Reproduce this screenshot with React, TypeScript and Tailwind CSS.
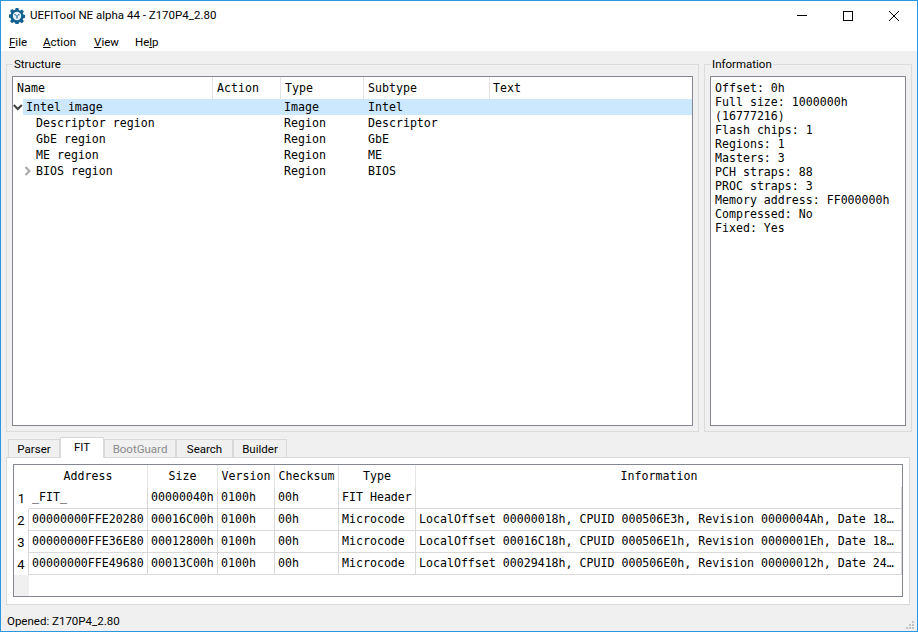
const mono = "font-['DejaVu_Sans_Mono',monospace] text-[11.6px]";
const ui = "font-['Roboto','Open_Sans',sans-serif] text-[11.5px]";

const treeRows = [
  { name: "Intel image", type: "Image", subtype: "Intel", indent: 0, selected: true, arrow: "down" },
  { name: "Descriptor region", type: "Region", subtype: "Descriptor", indent: 1 },
  { name: "GbE region", type: "Region", subtype: "GbE", indent: 1 },
  { name: "ME region", type: "Region", subtype: "ME", indent: 1 },
  { name: "BIOS region", type: "Region", subtype: "BIOS", indent: 1, arrow: "right" },
];

const infoLines = [
  "Offset: 0h",
  "Full size: 1000000h",
  "(16777216)",
  "Flash chips: 1",
  "Regions: 1",
  "Masters: 3",
  "PCH straps: 88",
  "PROC straps: 3",
  "Memory address: FF000000h",
  "Compressed: No",
  "Fixed: Yes",
];

const fitRows = [
  ["1", "_FIT_", "00000040h", "0100h", "00h", "FIT Header", ""],
  ["2", "00000000FFE20280", "00016C00h", "0100h", "00h", "Microcode", "LocalOffset 00000018h, CPUID 000506E3h, Revision 0000004Ah, Date 18…"],
  ["3", "00000000FFE36E80", "00012800h", "0100h", "00h", "Microcode", "LocalOffset 00016C18h, CPUID 000506E1h, Revision 0000001Eh, Date 18…"],
  ["4", "00000000FFE49680", "00013C00h", "0100h", "00h", "Microcode", "LocalOffset 00029418h, CPUID 000506E0h, Revision 00000012h, Date 24…"],
];

const fitCols = "grid grid-cols-[119px_70px_57px_64px_77px_1fr]";

const GearIcon = () => (
  <svg width="16" height="16" viewBox="0 0 16 16">
    <path
      fill="#0f5f8f"
      d="M6.6 0h2.8l.4 2.1 1.3.6 1.8-1.2 2 2-1.2 1.8.6 1.3 2.1.4v2.8l-2.1.4-.6 1.3 1.2 1.8-2 2-1.8-1.2-1.3.6-.4 2.1H6.6l-.4-2.1-1.3-.6-1.8 1.2-2-2 1.2-1.8-.6-1.3L-.4 9.4V6.6l2.1-.4.6-1.3L1.1 3.1l2-2 1.8 1.2 1.3-.6z"
    />
    <circle cx="8" cy="8" r="4.2" fill="#e8f2f8" />
    <path fill="#0f5f8f" d="M7.4 7h1.2v3.4H7.4zM5.6 6h1.1v1.6H5.6zM9.3 6h1.1v1.6H9.3z" />
  </svg>
);

const GroupBox = ({ title, className, children }: { title: string; className: string; children: React.ReactNode }) => (
  <fieldset className={`min-w-0 border border-[#dcdcdc] px-[5px] pb-[4px] ${className}`}>
    <legend className={`${ui} ml-[1px] px-[1px] leading-[14px] text-black`}>{title}</legend>
    {children}
  </fieldset>
);

const TabLabel = ({ label, active, disabled, className }: { label: string; active?: boolean; disabled?: boolean; className: string }) => (
  <div
    className={`${className} flex items-center justify-center border border-b-0 border-[#d9d9d9] ${
      active ? "relative z-10 -mb-px h-[21px] bg-white" : "h-[18px] bg-[#f0f0f0] pt-[2px]"
    } ${disabled ? "text-[#8a8a8a]" : "text-black"}`}
  >
    {label}
  </div>
);

export default function App() {
  return (
    <div className="flex h-[632px] w-[918px] flex-col overflow-hidden border border-t-0 border-[#2b97e0] bg-[#f0f0f0] text-black">
      {/* title bar */}
      <div className="flex h-[30px] items-center border-t border-[#2b97e0] bg-white">
        <div className="ml-[8px] mr-[5px]">
          <GearIcon />
        </div>
        <span className={ui}>UEFITool NE alpha 44 - Z170P4_2.80</span>
        <div className="ml-auto flex h-full items-center">
          <div className="flex w-[46px] justify-center">
            <div className="h-px w-[10px] bg-black" />
          </div>
          <div className="flex w-[46px] justify-center">
            <div className="h-[10px] w-[10px] border border-black" />
          </div>
          <div className="flex w-[46px] justify-center">
            <svg width="10" height="10" viewBox="0 0 10 10">
              <path d="M0 0l10 10M10 0L0 10" stroke="#000" strokeWidth="1" />
            </svg>
          </div>
        </div>
      </div>

      {/* menu bar */}
      <div className={`${ui} flex h-[21px] items-center gap-[16px] bg-white pl-[8px] pt-[4px]`}>
        <span><u>F</u>ile</span>
        <span><u>A</u>ction</span>
        <span className="ml-[2px]"><u>V</u>iew</span>
        <span>He<u>l</u>p</span>
      </div>

      {/* top panes */}
      <div className="flex h-[381px] gap-[5px] pl-[5px] pt-[6px]">
        <GroupBox title="Structure" className="w-[693px]">
          <div className="mt-[5px] flex h-[350px] flex-col border border-[#828790] bg-white">
            <div className={`${mono} grid h-[22px] grid-cols-[200px_68px_83px_126px_1fr] leading-[22px]`}>
              <div className="border-r border-[#e5e5e5] pl-[4px]">Name</div>
              <div className="border-r border-[#e5e5e5] pl-[4px]">Action</div>
              <div className="border-r border-[#e5e5e5] pl-[4px]">Type</div>
              <div className="border-r border-[#e5e5e5] pl-[4px]">Subtype</div>
              <div className="pl-[3px]">Text</div>
            </div>
            {treeRows.map((row) => (
              <div key={row.name} className={`${mono} relative grid h-[16px] grid-cols-[200px_68px_83px_126px_1fr] leading-[16px]`}>
                <div className={`flex items-center ${row.indent ? "pl-[23px]" : "pl-[13px]"}`}>
                  {row.arrow === "down" && (
                    <svg className="absolute left-0 top-[5px]" width="10" height="7" viewBox="0 0 10 7">
                      <path d="M.8 1l4 4 4-4" fill="none" stroke="#404040" strokeWidth="2" />
                    </svg>
                  )}
                  {row.arrow === "right" && (
                    <svg className="absolute left-[11px] top-[3px]" width="8" height="10" viewBox="0 0 8 10">
                      <path d="M1.5 1l4 4-4 4" fill="none" stroke="#a6a6a6" strokeWidth="2" />
                    </svg>
                  )}
                  <span className="relative z-10">{row.name}</span>
                </div>
                <div />
                <div className="relative z-10 pl-[3px]">{row.type}</div>
                <div className="relative z-10 pl-[4px]">{row.subtype}</div>
                <div />
                {row.selected && <div className="absolute inset-y-0 left-[10px] right-0 bg-[#cce8ff]" />}
              </div>
            ))}
          </div>
        </GroupBox>

        <GroupBox title="Information" className="w-[208px]">
          <div className={`${mono} mt-[5px] h-[350px] border border-[#828790] bg-white px-[4px] pt-[4px] leading-[14px]`}>
            {infoLines.map((line) => (
              <div key={line} className="whitespace-nowrap">{line}</div>
            ))}
          </div>
        </GroupBox>
      </div>

      {/* tabs */}
      <div className="flex flex-col pl-[5px] pr-[7px] pt-[4px]">
        <div className={`${ui} flex h-[21px] items-end pl-[2px] leading-none`}>
          <TabLabel label="Parser" className="w-[52px]" />
          <TabLabel label="FIT" active className="w-[44px]" />
          <TabLabel label="BootGuard" disabled className="w-[72px]" />
          <TabLabel label="Search" className="w-[57px]" />
          <TabLabel label="Builder" className="w-[54px]" />
        </div>
        <div className="h-[148px] border border-[#d9d9d9] bg-white px-[6px] pb-[7px] pt-[6px]">
          <div className="flex h-[133px] flex-col border border-[#828790] bg-white">
            <div className="flex flex-1">
              <div className={`${ui} flex w-[15px] shrink-0 flex-col`}>
                <div className="h-[22px]" />
                {fitRows.map((row, i) => (
                  <div
                    key={row[0]}
                    className={`flex h-[22px] items-end justify-center pb-[2px] text-[13px] leading-[16px] ${i > 0 ? "border-r border-[#d9d9d9]" : ""}`}
                  >
                    {row[0]}
                  </div>
                ))}
                <div className="flex-1 bg-[#f0f0f0]" />
              </div>
              <div className={`${mono} flex min-w-0 flex-1 flex-col`}>
                <div className={`${fitCols} h-[22px] leading-[22px]`}>
                  {["Address", "Size", "Version", "Checksum", "Type", "Information"].map((h) => (
                    <div key={h} className="truncate border-r border-[#e5e5e5] text-center last:border-r-0">{h}</div>
                  ))}
                </div>
                {fitRows.map((row) => (
                  <div key={row[0]} className={`${fitCols} h-[22px] border-b border-[#d9d9d9] leading-[20px]`}>
                    {row.slice(1).map((cell, i) => (
                      <div
                        key={i}
                        className="overflow-hidden whitespace-nowrap border-r border-[#d9d9d9] pl-[3px]"
                      >
                        {cell}
                      </div>
                    ))}
                  </div>
                ))}
              </div>
            </div>
          </div>
        </div>
      </div>

      {/* status bar */}
      <div className={`${ui} flex h-[26px] items-center pl-[6px] pt-[7px]`}>
        <span>Opened: Z170P4_2.80</span>
        <svg className="ml-auto mr-[3px] mt-[7px]" width="8" height="8" viewBox="0 0 8 8">
          <path fill="#c4c4c4" d="M6 0h2v2H6zM3 3h2v2H3zM6 3h2v2H6zM0 6h2v2H0zM3 6h2v2H3zM6 6h2v2H6z" />
        </svg>
      </div>
    </div>
  );
}
